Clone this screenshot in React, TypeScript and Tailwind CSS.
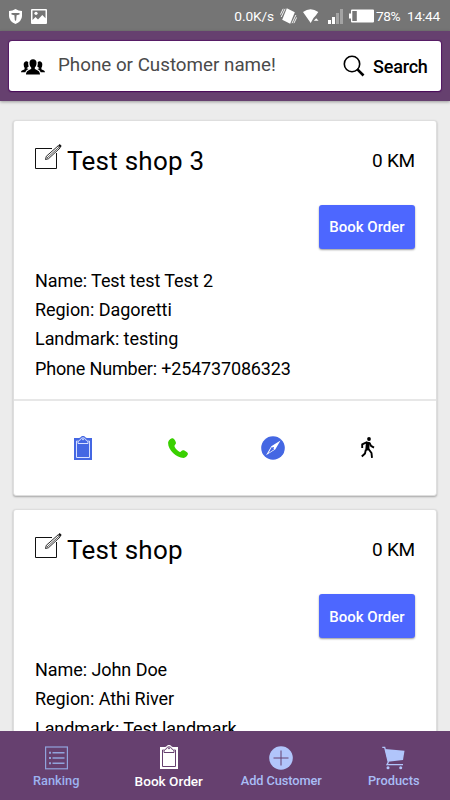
interface Shop {
  title: string;
  distance: string;
  name: string;
  region: string;
  landmark: string;
  phone: string;
}

const shops: Shop[] = [
  {
    title: 'Test shop 3',
    distance: '0 KM',
    name: 'Test test Test 2',
    region: 'Dagoretti',
    landmark: 'testing',
    phone: '+254737086323',
  },
  {
    title: 'Test shop',
    distance: '0 KM',
    name: 'John Doe',
    region: 'Athi River',
    landmark: 'Test landmark',
    phone: '',
  },
];

function StatusBar() {
  return (
    <div className="flex h-[31px] shrink-0 items-center bg-[#757575] pl-[9px] pr-[10px] pt-px text-[13.7px] text-white">
      <svg className="h-[15px] w-[13px]" viewBox="0 0 13 15">
        <path fill="#fff" d="M6.5 0 Q9.5 2 13 2 V7 Q13 12 6.5 15 Q0 12 0 7 V2 Q3.5 2 6.5 0Z" />
        <path fill="#757575" d="M2.5 4h8v1.5L7.6 6.3 7.2 11 6.5 12 5.8 11 5.4 6.3 2.5 5.5z" />
      </svg>
      <svg className="ml-[9px] h-[15px] w-4" viewBox="0 0 16 15">
        <path
          fill="#fff"
          fillRule="evenodd"
          d="M1 0h14a1 1 0 0 1 1 1v13a1 1 0 0 1-1 1H1a1 1 0 0 1-1-1V1a1 1 0 0 1 1-1zM1.5 1.5V11l3-3L7 10.5 11.3 6l3.2 3.2V1.5z"
        />
        <circle cx="5" cy="4.3" r="1.6" fill="#fff" />
      </svg>
      <span className="ml-auto tracking-[-0.1px]">0.0K/s</span>
      <svg className="ml-[6px] h-4 w-[17px]" viewBox="0 0 17 16">
        <path fill="#fff" d="M6.8.3 14.8 4.2 10.2 15.7 2.2 11.8z" />
        <path
          fill="none"
          stroke="#fff"
          strokeWidth="0.9"
          d="M5.1.8 1.2 9M3.2.8.4 6.6M12 15.2 15.9 7M13.9 15.2 16.7 9.4"
        />
      </svg>
      <svg className="ml-[6px] h-[15px] w-4" viewBox="0 0 16 15">
        <path fill="#fff" d="M0 3Q7.5-2.5 15.3 3L12.8 6.5 10.5 9 7.7 14z" />
        <path fill="#fff" d="m13.2 9.2 2.4 2.6h-4.8z" />
      </svg>
      <svg className="ml-[9px] h-[15px] w-[15px]" viewBox="0 0 15 15">
        <path fill="#fff" d="M0 11h3v4H0zM4 8h3v7H4z" />
        <path fill="#a3a3a3" d="M8 4h3v11H8zM12 0h3v15h-3z" />
      </svg>
      <svg className="ml-[6px] mb-px h-[14px] w-[25px]" viewBox="0 0 25 14">
        <path fill="#fff" d="M3 .5h21a1 1 0 0 1 1 1v11a1 1 0 0 1-1 1H3a1 1 0 0 1-1-1V9.5H0v-5h2v-3a1 1 0 0 1 1-1z" />
        <path fill="#757575" d="M3.3 2h4.5v10H3.3z" />
      </svg>
      <span className="ml-[2px] w-[25px] tracking-[-0.4px]">78%</span>
      <span className="ml-[6px] w-[33px] tracking-[-0.2px]">14:44</span>
    </div>
  );
}

function SearchBar() {
  return (
    <header className="relative z-10 h-[70px] shrink-0 bg-[#66406f] px-[9px] pt-[10px] shadow-[0_1px_3px_rgba(0,0,0,0.35)]">
      <div className="flex h-[50px] items-center rounded-[3px] bg-white pl-[12px] pr-[13px] shadow-[0_1px_1px_0_#4a0d59,0_0_1px_1px_#561a65]">
        <svg className="mt-[2px] h-4 w-6" viewBox="0 0 24 16">
          <path d="M8.5 4C8.5 1.4 9.8.2 12 .2S15.5 1.4 15.5 4c0 2-.7 3.5-1.7 4.5V10c1.8 1 5.2 1.5 5.2 5.6H5c0-4.1 3.4-4.6 5.2-5.6V8.5c-1-1-1.7-2.5-1.7-4.5z" />
          <path d="M7.3 3.3C6.5 2.3 5.5 2 4.5 2.4 2.7 3 2.5 5 2.8 6.5c0 1 .3 1.7.8 2.3v1.5C2.7 11.2.2 11 0 13.2h4.3c.8-2 2.2-2.5 3.3-3.2L5.5 9.3 7.7 7.5C7.2 6 7 4.8 7.3 3.3zM16.7 3.3c.8-1 1.8-1.3 2.8-.9 1.8.6 2 2.6 1.7 4.1 0 1-.3 1.7-.8 2.3v1.5c.9.9 3.4.7 3.6 2.9h-4.3c-.8-2-2.2-2.5-3.3-3.2l2.1-.7-2.2-1.8c.5-1.5.7-2.7.4-4.2z" />
        </svg>
        <span className="mb-px ml-[13px] text-[18.8px] text-[#4a4a4a]">Phone or Customer name!</span>
        <svg className="ml-auto h-[22px] w-[22px]" viewBox="0 0 22 22" fill="none" stroke="#000">
          <circle cx="9" cy="9" r="7.7" strokeWidth="1.6" />
          <path strokeWidth="2.6" d="m14.2 14.2 6.3 6.3" />
        </svg>
        <span className="ml-2 w-[55px] text-[18px] font-medium tracking-[-0.2px]">Search</span>
      </div>
    </header>
  );
}

function EditIcon() {
  return (
    <svg className="h-[26px] w-[27px]" viewBox="0 0 27 26" fill="none" stroke="#111">
      <path d="M17 4.5H.5v20h21V9" />
      <path strokeWidth="0.9" d="m10.5 15.5.8-3.2L23.3 1.7l1.9 2.2-11.7 10.8z" />
      <path strokeWidth="0.7" d="M12 14 24 3.2" />
      <path strokeWidth="2" d="m24 .8 2 2" />
    </svg>
  );
}

function ClipboardIcon({ fill, line }: { fill: string; line: string }) {
  return (
    <svg className="h-[25px] w-[18px]" viewBox="0 0 18 25">
      <path fill={fill} d="M0 2h5.2Q6.5 1.8 7 .8 9-1 11 .8q.5 1 1.8 1.2H18v22H0z" />
      <path
        fill="none"
        stroke={line}
        d="M3.8 5H2.5v16.5h13V5h-1.3M4 7.5V6Q4.3 4.3 6.5 3.8q.3-2 2.5-2t2.5 2Q13.7 4.3 14 6v1.5z"
      />
      <circle cx="9" cy="3.3" r="0.9" fill={line} />
    </svg>
  );
}

function CardActions() {
  return (
    <div className="flex h-[96.4px] items-center border-t-2 border-[#e7e7e7] pl-[21px] pr-5">
      <span className="flex flex-1 justify-center">
        <ClipboardIcon fill="#4467e3" line="#d7e0ff" />
      </span>
      <span className="flex flex-1 justify-center">
        <svg className="h-5 w-5" viewBox="0 0 20 20">
          <path
            fill="#39d000"
            d="M4.8.2C3.3-.3.2 2.2.1 4.7-.2 12 8.2 19.8 15.5 19.9c2 0 4.5-2.5 4.4-4.2-.1-1.4-3.6-3.5-4.9-3.4-1.3.1-2.2 1.9-3.2 1.6-1.8-.6-5-3.8-5.3-5.6-.2-1.2 1.6-1.9 1.5-3.3C8 3.7 6.2.6 4.8.2z"
          />
        </svg>
      </span>
      <span className="flex flex-1 justify-center">
        <svg className="h-6 w-6" viewBox="0 0 24 24">
          <circle cx="12" cy="12" r="11.8" fill="#4467e3" />
          <path fill="#fff" d="m19.5 4.5-5.3 9L5 19.2l5.3-9z" />
          <path fill="#4467e3" d="m10.8 11 2.5 2.2-5.8 3.7z" />
          <circle cx="12.2" cy="11.8" r="0.8" fill="#4467e3" />
        </svg>
      </span>
      <span className="flex flex-1 justify-center">
        <svg className="h-[22px] w-[14px]" viewBox="0 0 14 22">
          <circle cx="8" cy="2" r="1.9" />
          <path
            fill="none"
            stroke="#000"
            strokeWidth="1.9"
            strokeLinejoin="round"
            d="M1.2 11V7.3l4.3-2 3.2.8 1.3 2.8 3 1.7M4.8 12.7 4 16.5.8 19.5M7.5 12l3 4 .5 4.8"
          />
          <path d="m5 4.8 3.7.7-.4 7.5-4.1 1z" />
        </svg>
      </span>
    </div>
  );
}

function ShopCard({ shop }: { shop: Shop }) {
  return (
    <article className="shrink-0 overflow-hidden rounded-[3px] border border-[#dedede] bg-white shadow-[0_1px_2px_rgba(0,0,0,0.3)]">
      <div className="px-[21px] pt-[18px]">
        <div className="flex h-[44px] items-center">
          <span className="mb-[9px]">
            <EditIcon />
          </span>
          <h2 className="ml-[5px] text-[26px] tracking-[0.25px]">{shop.title}</h2>
          <span className="ml-auto text-[19px] tracking-[-0.2px]">{shop.distance}</span>
        </div>
        <button className="ml-auto mt-[22px] block h-[44px] w-24 rounded-[3px] bg-[#4d67ff] pt-px text-[15px] font-medium text-white shadow-[0_1px_2px_rgba(0,0,0,0.4)]">
          Book Order
        </button>
        <div className="mt-[16.5px] h-[133.5px] text-[18px] leading-[29.4px] tracking-[-0.06px]">
          <p>Name: {shop.name}</p>
          <p>Region: {shop.region}</p>
          <p>Landmark: {shop.landmark}</p>
          {shop.phone && <p className="tracking-[-0.17px]">Phone Number: {shop.phone}</p>}
        </div>
      </div>
      <CardActions />
    </article>
  );
}

function TabBar() {
  return (
    <nav className="grid h-[69px] shrink-0 grid-cols-4 bg-[#66406f] pt-[14px] text-[12.8px] font-medium text-[#a9bdf5]">
      <div className="flex flex-col items-center">
        <svg className="mt-px h-6 w-[23px]" viewBox="0 0 23 24" fill="none" stroke="#91a3dc">
          <rect x="0.6" y="1" width="21.8" height="21.8" strokeWidth="1.2" />
          <path strokeWidth="1.4" d="M7.5 6.7h12M7.5 12h12M7.5 17.3h12" />
          <path strokeWidth="2" d="M4 6.7h2M4 12h2M4 17.3h2" />
        </svg>
        <span className="mt-px text-[#9db3f0]">Ranking</span>
      </div>
      <div className="flex flex-col items-center text-white">
        <ClipboardIcon fill="#fff" line="#66406f" />
        <span className="mt-px text-[13.6px]">Book Order</span>
      </div>
      <div className="flex flex-col items-center">
        <svg className="mt-px h-6 w-6" viewBox="0 0 24 24">
          <circle cx="12" cy="12" r="11.8" fill="#b1c5fb" />
          <path stroke="#66406f" d="M12 4.5v15M4.5 12h15" />
        </svg>
        <span className="mt-px tracking-[-0.1px]">Add Customer</span>
      </div>
      <div className="flex flex-col items-center">
        <svg className="mt-px h-6 w-[23px]" viewBox="0 0 23 24">
          <path fill="#b1c5fb" d="M3 3 22.5 4.8 21 14 6 15.7z" />
          <path fill="none" stroke="#b1c5fb" strokeWidth="1.3" d="M.3 1.3h2.4L6.3 16 5 18.6h16" />
          <circle cx="6" cy="21.8" r="1.5" fill="#b1c5fb" />
          <circle cx="18.7" cy="21.8" r="1.5" fill="#b1c5fb" />
        </svg>
        <span className="mt-px">Products</span>
      </div>
    </nav>
  );
}

export default function App() {
  return (
    <div className="flex h-[800px] w-[450px] flex-col overflow-hidden bg-[#ececec] font-['Roboto',sans-serif] text-black">
      <StatusBar />
      <SearchBar />
      <main className="flex min-h-0 flex-1 flex-col gap-[13px] overflow-hidden px-[13px] pt-[19px]">
        {shops.map((shop) => (
          <ShopCard key={shop.title} shop={shop} />
        ))}
      </main>
      <TabBar />
    </div>
  );
}
